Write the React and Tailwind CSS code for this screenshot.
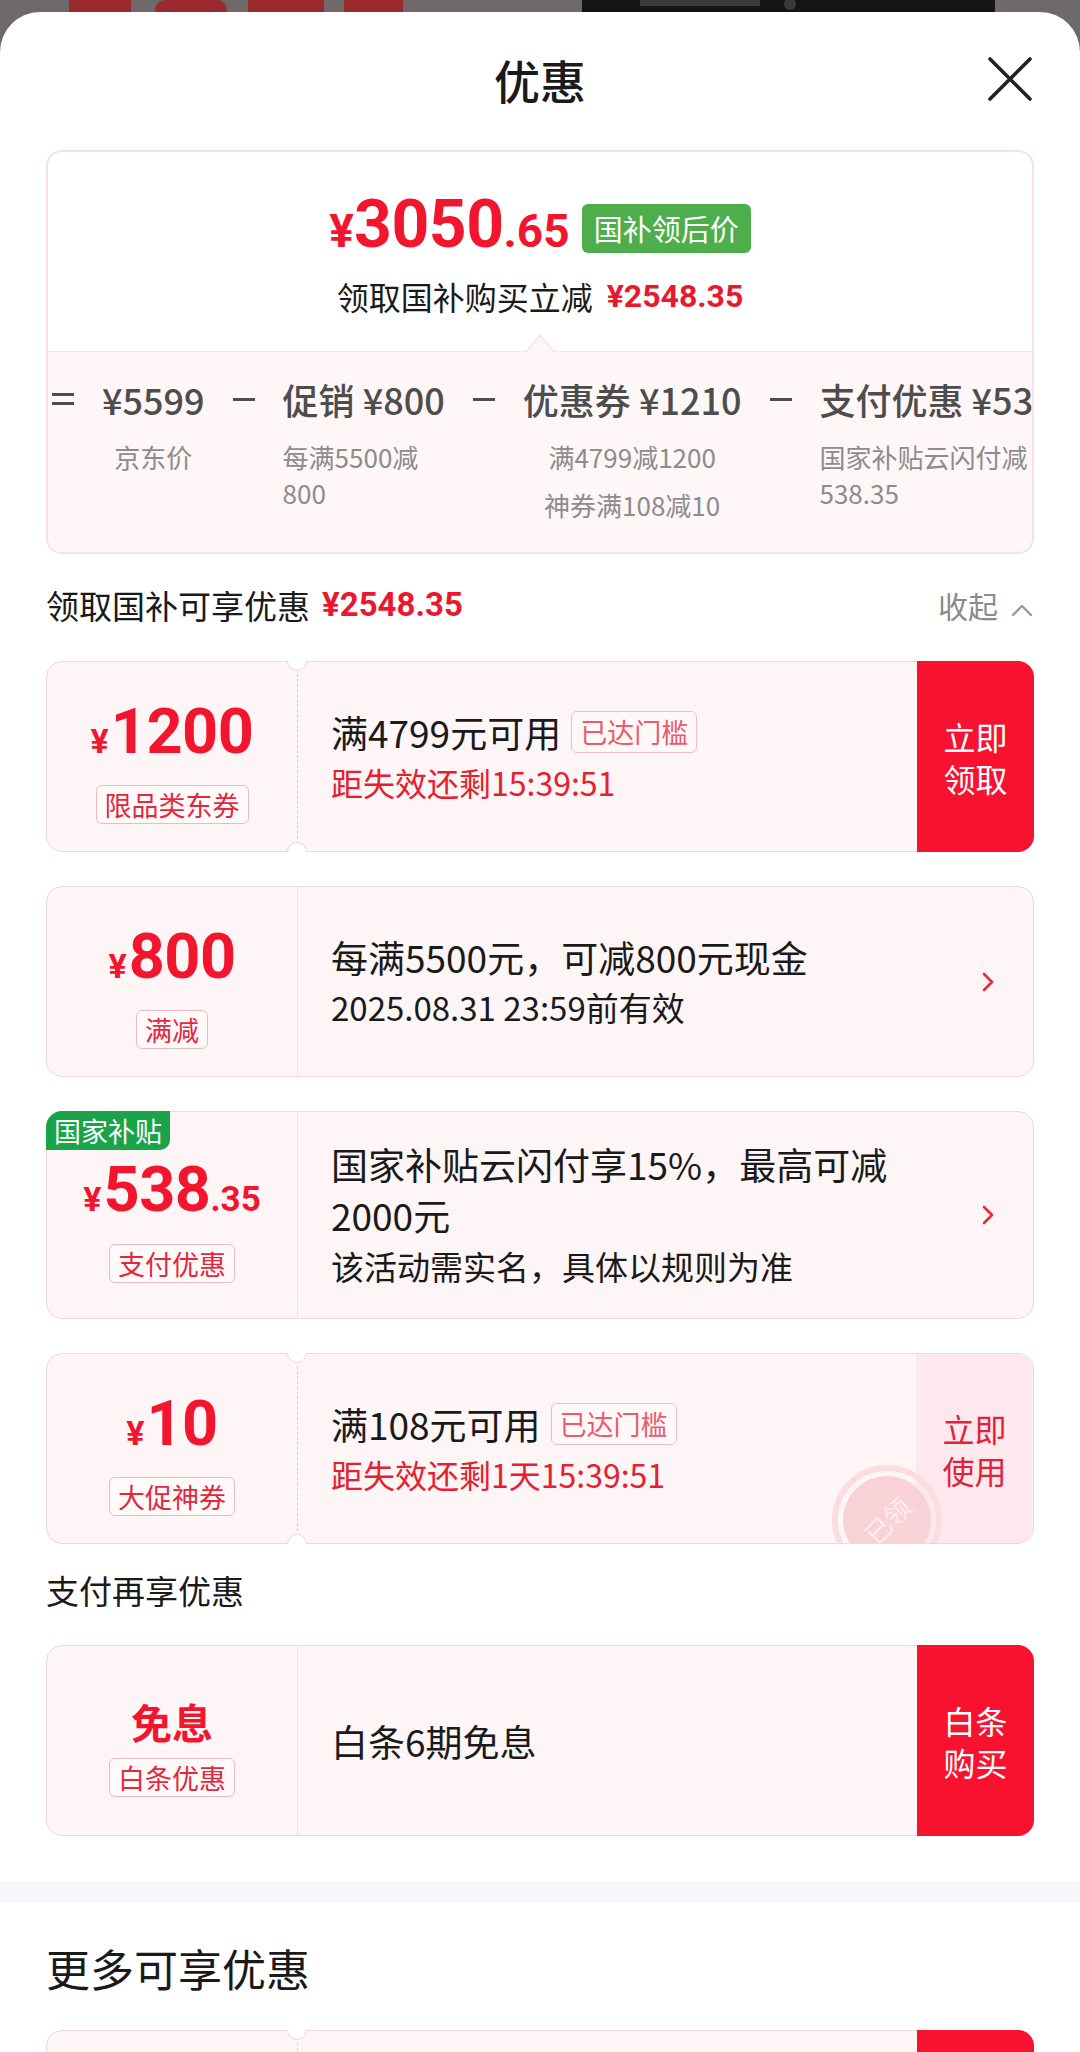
import React from "react";

const CJK = "font-['Noto_Sans_CJK_SC','Noto_Sans',sans-serif]";
const NUM = "font-['Roboto','Noto_Sans_CJK_SC',sans-serif]";

function Tag({ children }) {
  return (
    <div className="mt-[13px] h-[39px] px-[8px] flex items-center rounded-[6px] border border-[#ecbac1] bg-[#fff9fa] text-[27px] leading-none text-[#e2283c]">
      {children}
    </div>
  );
}

function Amount({ big, small }) {
  return (
    <div className={`flex items-baseline text-[#f2152e] font-bold leading-[62px] ${NUM}`}>
      <span className="text-[34px] mr-[2px]">¥</span>
      <span className="text-[63px] tracking-[-0.5px]">{big}</span>
      {small && <span className="text-[35px]">{small}</span>}
    </div>
  );
}

function Reached() {
  return (
    <span className="ml-[10px] h-[42px] px-[8px] inline-flex items-center rounded-[6px] border border-[#f2bcc4] bg-[#fff8f9] text-[27px] leading-none text-[#ec5a6b]">
      已达门槛
    </span>
  );
}

function Chevron() {
  return (
    <svg width="14" height="22" viewBox="0 0 14 22" className="shrink-0 ml-[10px]">
      <path d="M3 3 L11 11 L3 19" fill="none" stroke="#e8283c" strokeWidth="2.6" strokeLinecap="round" strokeLinejoin="round" />
    </svg>
  );
}

function Notches() {
  return (
    <>
      <div className="absolute left-[240px] -top-px w-[20px] h-[10px] overflow-hidden z-10">
        <div className="w-[20px] h-[20px] -mt-[10px] rounded-full bg-white border border-[#f0d2d7]" />
      </div>
      <div className="absolute left-[240px] -bottom-px w-[20px] h-[10px] overflow-hidden z-10">
        <div className="w-[20px] h-[20px] rounded-full bg-white border border-[#f0d2d7]" />
      </div>
    </>
  );
}

function RedButton({ a, b }) {
  return (
    <div className="w-[117px] shrink-0 -my-px -mr-px rounded-r-[16px] bg-[#f81230] flex flex-col items-center justify-center text-white text-[32px] leading-[42px]">
      <span>{a}</span>
      <span>{b}</span>
    </div>
  );
}

function Coupon({ hClass, notch, left, children, action, extra }) {
  return (
    <div className={`relative mx-[46px] mt-[34px] flex rounded-[16px] border border-[#f2d6da] bg-[#fef5f6] ${hClass}`}>
      <div className="w-[250px] shrink-0 flex flex-col items-center justify-center pt-[12px]">{left}</div>
      <div className={notch ? "my-[12px] border-l border-dashed border-[#efc6cc]" : "border-l border-[#f6e0e3]"} />
      <div className="flex-1 min-w-0 flex items-center pl-[33px] pr-[38px]">{children}</div>
      {action}
      {notch && <Notches />}
      {extra}
    </div>
  );
}

function Minus() {
  return (
    <div className="h-[46px] flex items-center shrink-0">
      <div className="w-[22px] h-[3px] bg-[#4d4d4d]" />
    </div>
  );
}

function Equals() {
  return (
    <div className="h-[46px] flex flex-col justify-center gap-[6px] shrink-0">
      <div className="w-[22px] h-[3px] bg-[#4d4d4d]" />
      <div className="w-[22px] h-[3px] bg-[#4d4d4d]" />
    </div>
  );
}

export default function App() {
  return (
    <div className={`relative w-[1080px] h-[2052px] overflow-hidden bg-[#6e6a6a] ${CJK}`}>
      {/* page behind the sheet */}
      <svg className="absolute left-0 top-0" width="1080" height="60" viewBox="0 0 1080 60">
        <rect width="1080" height="60" fill="#6e6a6a" />
        <rect x="69" y="0" width="62" height="22" fill="#9a2a30" />
        <rect x="155" y="0" width="72" height="22" rx="10" fill="#9a2a30" />
        <rect x="248" y="0" width="76" height="22" fill="#9a2a30" />
        <rect x="344" y="0" width="59" height="22" fill="#9a2a30" />
        <rect x="582" y="0" width="413" height="60" fill="#151515" />
        <rect x="640" y="0" width="120" height="6" fill="#3a3a3a" />
        <circle cx="790" cy="4" r="6" fill="#3a3a3a" />
      </svg>

      <div className="relative mt-[12px] bg-white rounded-t-[40px] h-[2040px]">
        {/* header */}
        <div className="h-[138px] grid grid-cols-[1fr_auto_1fr] items-center px-[48px]">
          <div />
          <div className="text-[46px] font-medium text-[#1a1a1a] leading-none -mt-[4px]">优惠</div>
          <div className="flex justify-end -mt-[4px]">
            <svg width="44" height="44" viewBox="0 0 44 44">
              <path d="M2 2 L42 42 M42 2 L2 42" stroke="#222" strokeWidth="3.6" strokeLinecap="round" />
            </svg>
          </div>
        </div>

        {/* summary card */}
        <div className="mx-[46px] h-[404px] rounded-[16px] border-2 border-[#f9dee2] overflow-hidden flex flex-col">
          <div className="h-[199px] shrink-0 flex flex-col items-center pt-[41px]">
            <div className="flex items-center">
              <div className={`flex items-baseline text-[#f2152e] font-bold leading-[64px] ${NUM}`}>
                <span className="text-[46px]">¥</span>
                <span className="text-[66px] tracking-[-0.5px]">3050</span>
                <span className="text-[46px]">.65</span>
              </div>
              <div className="ml-[12px] h-[49px] px-[12px] rounded-[6px] bg-[#4fae4c] text-white text-[29px] flex items-center leading-none">
                国补领后价
              </div>
            </div>
            <div className="mt-[11px] flex items-center leading-[44px] text-[32px] text-[#1a1a1a]">
              领取国补购买立减
              <span className={`ml-[14px] font-bold text-[#e8192f] ${NUM}`}>¥2548.35</span>
            </div>
          </div>
          <div className="relative flex-1 bg-[#fef6f7] border-t border-[#fbe1e5]">
            <svg className="absolute left-1/2 -translate-x-1/2 -top-[18px]" width="28" height="19" viewBox="0 0 28 19">
              <path d="M0 19 L14 1 L28 19 Z" fill="#fef6f7" />
              <path d="M0 18 L14 1 L28 18" fill="none" stroke="#fbe1e5" strokeWidth="1.5" />
            </svg>
            <div className="flex items-start gap-[28px] pl-[4px] pt-[24px] whitespace-nowrap text-[#4d4d4d]">
              <Equals />
              <div className="flex flex-col items-center shrink-0">
                <div className="text-[36px] font-medium leading-[46px]">¥5599</div>
                <div className="mt-[17px] text-[26px] leading-[36px] text-[#8c8c8c]">京东价</div>
              </div>
              <Minus />
              <div className="flex flex-col shrink-0">
                <div className="text-[36px] font-medium leading-[46px]">促销 ¥800</div>
                <div className="mt-[17px] text-[26px] leading-[36px] text-[#8c8c8c]">
                  每满5500减
                  <br />
                  800
                </div>
              </div>
              <Minus />
              <div className="flex flex-col items-center shrink-0">
                <div className="text-[36px] font-medium leading-[46px]">优惠券 ¥1210</div>
                <div className="mt-[17px] text-[26px] leading-[36px] text-[#8c8c8c]">满4799减1200</div>
                <div className="mt-[12px] text-[26px] leading-[36px] text-[#8c8c8c]">神券满108减10</div>
              </div>
              <Minus />
              <div className="flex flex-col shrink-0">
                <div className="text-[36px] font-medium leading-[46px]">支付优惠 ¥538.35</div>
                <div className="mt-[17px] text-[26px] leading-[36px] text-[#8c8c8c]">
                  国家补贴云闪付减
                  <br />
                  538.35
                </div>
              </div>
            </div>
          </div>
        </div>

        {/* section header */}
        <div className="mt-[29px] mx-[46px] h-[44px] flex items-center justify-between">
          <div className="flex items-center text-[33px] text-[#1a1a1a] leading-[44px]">
            领取国补可享优惠
            <span className={`ml-[12px] font-bold text-[#e8192f] ${NUM}`}>¥2548.35</span>
          </div>
          <div className="flex items-center text-[30px] text-[#8a8a8a] leading-[44px]">
            收起
            <svg width="24" height="14" viewBox="0 0 24 14" className="ml-[12px] mt-[10px]">
              <path d="M3 12 L12 3 L21 12" fill="none" stroke="#999" strokeWidth="2.4" strokeLinecap="round" strokeLinejoin="round" />
            </svg>
          </div>
        </div>

        {/* coupon 1 */}
        <Coupon
          hClass="h-[191px]"
          notch
          left={
            <>
              <Amount big="1200" />
              <Tag>限品类东券</Tag>
            </>
          }
          action={<RedButton a="立即" b="领取" />}
        >
          <div className="flex flex-col">
            <div className="flex items-center text-[37px] leading-[50px] text-[#1a1a1a]">
              满4799元可用
              <Reached />
            </div>
            <div className="text-[32px] leading-[50px] text-[#e5202f]">距失效还剩15:39:51</div>
          </div>
        </Coupon>

        {/* coupon 2 */}
        <Coupon
          hClass="h-[191px]"
          left={
            <>
              <Amount big="800" />
              <Tag>满减</Tag>
            </>
          }
        >
          <div className="flex-1 flex flex-col">
            <div className="text-[37px] leading-[50px] text-[#1a1a1a] whitespace-nowrap">每满5500元，可减800元现金</div>
            <div className="text-[33px] leading-[50px] text-[#1a1a1a]">2025.08.31 23:59前有效</div>
          </div>
          <Chevron />
        </Coupon>

        {/* coupon 3 */}
        <Coupon
          hClass="h-[208px]"
          left={
            <>
              <Amount big="538" small=".35" />
              <Tag>支付优惠</Tag>
            </>
          }
          extra={
            <div className="absolute -left-px -top-px h-[39px] px-[8px] flex items-center rounded-tl-[16px] rounded-br-[10px] bg-[#1ba34a] text-white text-[27px] leading-none">
              国家补贴
            </div>
          }
        >
          <div className="flex-1 flex flex-col">
            <div className="text-[37px] leading-[51px] text-[#1a1a1a] whitespace-nowrap">
              国家补贴云闪付享15%，最高可减
              <br />
              2000元
            </div>
            <div className="text-[33px] leading-[51px] text-[#1a1a1a]">该活动需实名，具体以规则为准</div>
          </div>
          <Chevron />
        </Coupon>

        {/* coupon 4 */}
        <Coupon
          hClass="h-[191px]"
          notch
          left={
            <>
              <Amount big="10" />
              <Tag>大促神券</Tag>
            </>
          }
          action={
            <div className="w-[117px] shrink-0 rounded-r-[15px] bg-[#fde9ed] flex flex-col items-center justify-center text-[#e3213a] text-[32px] leading-[42px]">
              <span>立即</span>
              <span>使用</span>
            </div>
          }
          extra={
            <div className="absolute inset-0 overflow-hidden rounded-[15px] pointer-events-none">
              <div className="absolute left-[785px] top-[111px] w-[110px] h-[110px] rounded-full border-[6px] border-[#fbdce1] flex items-center justify-center">
                <div className="w-[88px] h-[88px] rounded-full bg-[#f9d2d8] flex items-center justify-center">
                  <span className="-rotate-45 text-[26px] text-[#fdeef0] leading-none">已领</span>
                </div>
              </div>
            </div>
          }
        >
          <div className="flex flex-col">
            <div className="flex items-center text-[37px] leading-[50px] text-[#1a1a1a]">
              满108元可用
              <Reached />
            </div>
            <div className="text-[32px] leading-[50px] text-[#e5202f]">距失效还剩1天15:39:51</div>
          </div>
        </Coupon>

        {/* pay section */}
        <div className="mt-[24px] mx-[46px] text-[33px] leading-[44px] text-[#1a1a1a]">支付再享优惠</div>

        <div className="-mt-[1px]">
          <Coupon
            hClass="h-[191px]"
            left={
              <>
                <div className="text-[41px] leading-[48px] font-bold text-[#f2152e]">免息</div>
                <Tag>白条优惠</Tag>
              </>
            }
            action={<RedButton a="白条" b="购买" />}
          >
            <div className="text-[37px] leading-[50px] text-[#1a1a1a]">白条6期免息</div>
          </Coupon>
        </div>

        <div className="mt-[45px] h-[22px] bg-[#f5f7fa]" />

        <div className="mt-[35px] mx-[46px] text-[44px] leading-[60px] text-[#1a1a1a]">更多可享优惠</div>

        <div className="-mt-[2px]">
          <Coupon
            hClass="h-[191px]"
            notch
            left={
              <>
                <Amount big="300" />
                <Tag>限品类东券</Tag>
              </>
            }
            action={<RedButton a="立即" b="领取" />}
          >
            <div className="flex flex-col">
              <div className="text-[37px] leading-[50px] text-[#1a1a1a]">满5000元可用</div>
            </div>
          </Coupon>
        </div>
      </div>
    </div>
  );
}
